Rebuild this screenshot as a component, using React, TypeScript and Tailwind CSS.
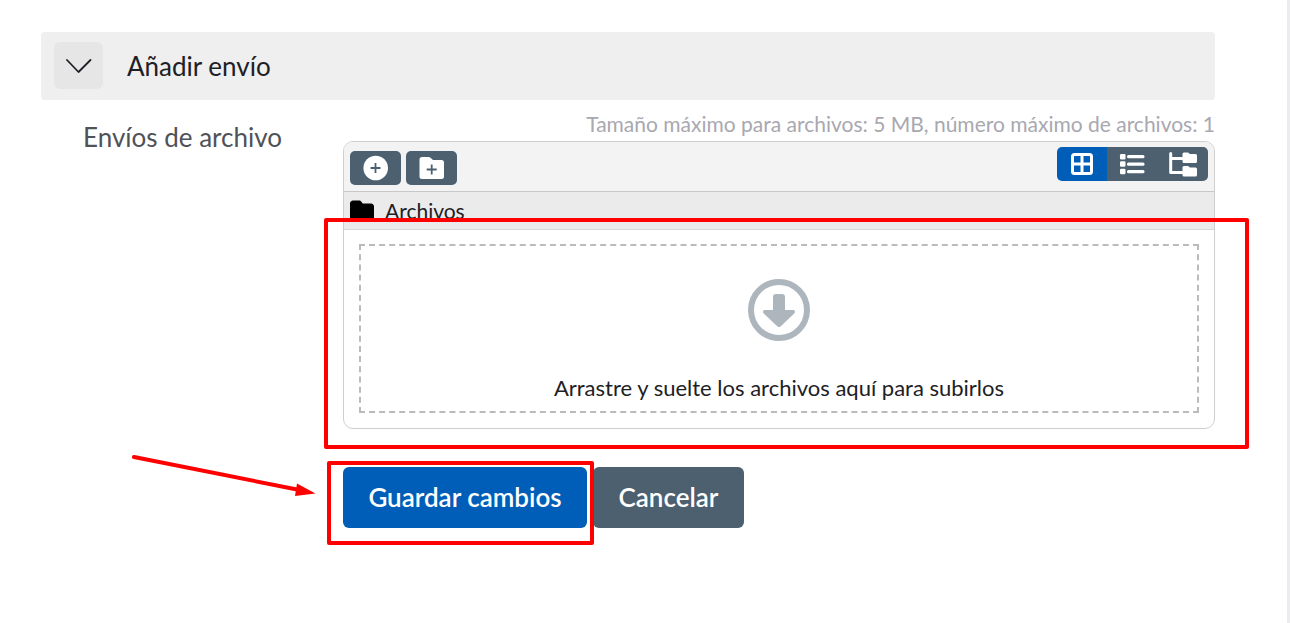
import React, { useState } from 'react';
import { FaFolder } from 'react-icons/fa6';

function CirclePlusIcon() {
  return (
    <svg viewBox="0 0 26 26" className="w-[26px] h-[26px]" aria-hidden="true">
      <circle cx="12.700" cy="13" r="12.300" fill="#fff" />
      <path d="M12.500 8v10M7.500 13h10" stroke="#4c6070" strokeWidth="1.800" />
    </svg>
  );
}

function FolderPlusIcon() {
  return (
    <svg viewBox="0 0 26 24" className="w-[26px] h-6" aria-hidden="true">
      <path d="M3 1h6.500a3 3 0 0 1 2 .8L14 4h8.500a2.500 2.500 0 0 1 2.500 2.500v14a2.500 2.500 0 0 1-2.500 2.500h-19.500a2.500 2.500 0 0 1-2.500-2.500v-17a2.500 2.500 0 0 1 2.500-2.500z" fill="#fff" />
      <path d="M12.700 8.500v10M7.700 13.500h10" stroke="#4c6070" strokeWidth="1.800" />
    </svg>
  );
}

function GridIcon() {
  return (
    <svg viewBox="0 0 22 22" className="w-[22px] h-[22px]" fill="none" stroke="#fff" strokeWidth="3" aria-hidden="true">
      <rect x="1.500" y="1.500" width="19" height="19" rx="2" />
      <path d="M11 2v18M2 11h18" />
    </svg>
  );
}

function ListIcon() {
  return (
    <svg viewBox="0 0 26 22" className="w-[26px] h-[22px]" fill="#fff" aria-hidden="true">
      <rect x="1" y="1" width="5.500" height="5.500" rx="1.200" />
      <rect x="1" y="8.300" width="5.500" height="5.500" rx="1.200" />
      <rect x="1" y="15.800" width="5.500" height="5.500" rx="1.200" />
      <rect x="8" y="2" width="17.500" height="3.200" rx="1.500" />
      <rect x="8" y="9.500" width="17.500" height="3.200" rx="1.500" />
      <rect x="8" y="17" width="17.500" height="3.200" rx="1.500" />
    </svg>
  );
}

function TreeIcon() {
  return (
    <svg viewBox="0 0 28 25" className="w-7 h-[25px]" fill="#fff" aria-hidden="true">
      <path d="M1.700 1.500V20.500H13M1.700 6.500H13" fill="none" stroke="#fff" strokeWidth="3" strokeLinecap="round" strokeLinejoin="round" />
      <path d="M15 .5h4l2 1.500h5.500a1.500 1.500 0 0 1 1.500 1.500v6a1.500 1.500 0 0 1-1.500 1.500h-11.500a1.500 1.500 0 0 1-1.500-1.500v-7.500a1.500 1.500 0 0 1 1.500-1.500z" />
      <path d="M15 14h4l2 1.500h5.500a1.500 1.500 0 0 1 1.500 1.500v6a1.500 1.500 0 0 1-1.500 1.500h-11.500a1.500 1.500 0 0 1-1.500-1.500v-7.500a1.500 1.500 0 0 1 1.500-1.500z" />
    </svg>
  );
}

function DropArrowIcon() {
  return (
    <svg viewBox="0 0 62 62" className="w-[62px] h-[62px]" aria-hidden="true">
      <circle cx="31" cy="31" r="28" fill="none" stroke="#adb5bd" strokeWidth="6" />
      <path
        d="M28 15h6a3 3 0 0 1 3 3v13h8c2 0 2.600 2.200 1.200 3.600L32.500 47.400a2.200 2.200 0 0 1-3 0L15.800 34.600C14.400 33.200 15 31 17 31h8V18a3 3 0 0 1 3-3z"
        fill="#adb5bd"
      />
    </svg>
  );
}

const views = [
  { id: 'icons', label: 'Mostrar carpeta con iconos', icon: <GridIcon /> },
  { id: 'list', label: 'Mostrar carpeta con detalles', icon: <ListIcon /> },
  { id: 'tree', label: 'Mostrar carpeta como árbol', icon: <TreeIcon /> },
];

export default function App() {
  const [view, setView] = useState('icons');

  return (
    <main className="min-h-screen bg-white border-r-[3px] border-[#ececee] pl-[41px] pr-[72px] pt-8 font-['Lato',sans-serif] text-[#1d2125]">
      <div className="flex items-start h-[68px] rounded bg-[#efefef] pl-[13px] pt-2.5">
        <button type="button" aria-label="Contraer" className="flex items-center justify-center w-[49px] h-[47px] rounded-md bg-[#e6e6e6]">
          <svg viewBox="0 0 26 16" className="w-[26px] h-4" fill="none" stroke="#1d2125" strokeWidth="1.800" strokeLinecap="round" strokeLinejoin="round" aria-hidden="true">
            <path d="M1 2L12.500 14 24.500 2" />
          </svg>
        </button>
        <h3 className="ml-6 pt-2 text-[26px] leading-8">Añadir envío</h3>
      </div>

      <form onSubmit={e => e.preventDefault()}>
        <div className="flex pt-3">
          <div className="w-[302px] shrink-0 pl-[42px] pt-[9px] text-[26px] leading-8 text-[#4f5257]">Envíos de archivo</div>

          <div className="flex-1 min-w-0">
            <p className="mb-[5px] text-right text-[21px] leading-6 text-[#a8a8b0]">
              Tamaño máximo para archivos: 5 MB, número máximo de archivos: 1
            </p>

            <div className="relative">
              <div className="rounded-[10px] border border-[#cfcfcf] overflow-hidden">
                <div className="flex items-start justify-between h-[50px] px-1.5 bg-[#f3f3f3] border-b border-[#c8c8c8]">
                  <div className="flex gap-[5px] pt-[9px]">
                    <button type="button" aria-label="Agregar" className="flex items-center justify-center w-[51px] h-[34px] rounded-[5px] bg-[#4c6070]">
                      <CirclePlusIcon />
                    </button>
                    <button type="button" aria-label="Crear una carpeta" className="flex items-center justify-center w-[51px] h-[34px] rounded-[5px] bg-[#4c6070]">
                      <FolderPlusIcon />
                    </button>
                  </div>
                  <div className="flex mt-[5px] rounded-[5px] overflow-hidden w-[151px]">
                    {views.map(v => (
                      <button
                        key={v.id}
                        type="button"
                        aria-label={v.label}
                        onClick={() => setView(v.id)}
                        className={`flex flex-1 items-center justify-center h-[34px] ${view === v.id ? 'bg-[#005eb8]' : 'bg-[#4c6070]'}`}
                      >
                        {v.icon}
                      </button>
                    ))}
                  </div>
                </div>

                <div className="flex items-center h-[38px] pl-1.5 bg-[#ebebeb] border-b border-[#d8d8d8]">
                  <FaFolder className="w-6 h-6 text-black" />
                  <a href="#" className="ml-[11px] text-[21px] leading-8">Archivos</a>
                </div>

                <div className="px-[15px] pt-3.5 pb-[15px]">
                  <div className="flex flex-col items-center h-[169px] border-2 border-dashed border-[#bbb] pt-[33px]">
                    <DropArrowIcon />
                    <p className="mt-[31px] text-[22px] leading-8">Arrastre y suelte los archivos aquí para subirlos</p>
                  </div>
                </div>
              </div>

              <div className="absolute -left-[19px] -right-[34px] top-[77px] -bottom-5 border-4 border-[#ff0000] rounded-xs pointer-events-none" />
            </div>

            <div className="flex gap-1.5 mt-[38px]">
              <div className="relative">
                <button type="submit" className="w-[244px] h-[61px] rounded-md bg-[#005eb8] text-[26px] font-semibold text-white">
                  Guardar cambios
                </button>
                <div className="absolute -left-4 -right-[7px] -top-1.5 -bottom-[17px] border-4 border-[#ff0000] rounded-xs pointer-events-none" />
                <svg viewBox="0 0 186 42" className="absolute -left-[212px] -top-3 w-[186px] h-[42px] pointer-events-none" aria-hidden="true">
                  <path d="M3 2L166 34.500" stroke="#ff0000" strokeWidth="4" strokeLinecap="round" />
                  <path d="M166 28.500L184.500 38.500 164 41z" fill="#ff0000" />
                </svg>
              </div>
              <button type="button" className="w-[151px] h-[61px] rounded-md bg-[#4c6070] text-[26px] font-semibold text-white">
                Cancelar
              </button>
            </div>
          </div>
        </div>
      </form>
    </main>
  );
}
